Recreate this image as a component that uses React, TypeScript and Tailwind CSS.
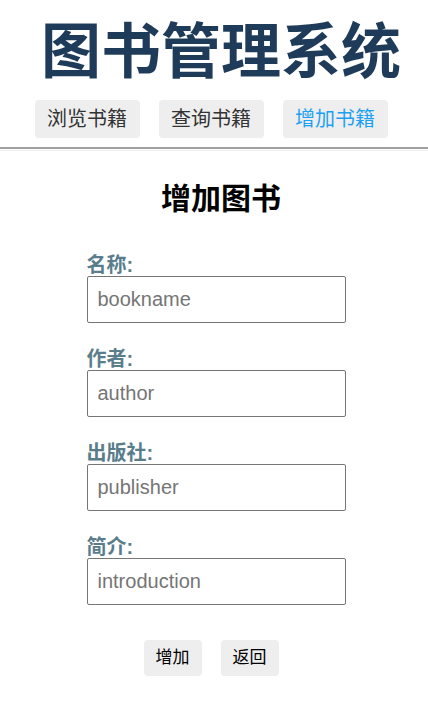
import React from 'react';

const fields = [
  { label: '名称:', placeholder: 'bookname' },
  { label: '作者:', placeholder: 'author' },
  { label: '出版社:', placeholder: 'publisher' },
  { label: '简介:', placeholder: 'introduction' },
];

const navItems = ['浏览书籍', '查询书籍', '增加书籍'];

export default function App() {
  return (
    <div className="min-h-[704px] bg-white font-['Liberation_Sans','Noto_Sans_CJK_SC',sans-serif]">
      {/* Header */}
      <h1 className="pt-[17px] pl-[14px] text-center text-[60px] font-bold leading-[72px] text-[#1f3b5a]">
        图书管理系统
      </h1>
      <nav className="mt-[11px] flex justify-center gap-[19px] pr-[6px]">
        {navItems.map((item, i) => (
          <button
            key={item}
            className={`h-[38px] w-[105px] rounded-[4px] bg-[#eeeeee] text-[20px] ${
              i === 2 ? 'text-[#1da1f2]' : 'text-[#333333]'
            }`}
          >
            {item}
          </button>
        ))}
      </nav>
      <div className="mt-[9px] h-[2px] bg-[#a0a0a0]" />
      <div className="h-px mt-px bg-[#efefef]" />

      {/* Form */}
      <h2 className="mt-[28px] pl-[14px] text-center text-[30px] font-bold leading-[40px] text-black">
        增加图书
      </h2>
      <div className="pl-[4px]">
        <form className="mx-auto mt-[35px] flex w-[259px] flex-col gap-[25px]">
          {fields.map(f => (
            <div key={f.label} className="flex flex-col">
              <label className="text-[20px] font-bold leading-[22px] text-[#5a7d8c]">
                {f.label}
              </label>
              <input
                placeholder={f.placeholder}
                className="h-[47px] w-full rounded-[2px] border border-[#767676] px-[10px] text-[20px] placeholder:text-[#757575]"
              />
            </div>
          ))}
          <div className="mt-[10px] flex justify-center gap-[19px] pr-[10px]">
            <button type="button" className="h-[36px] w-[58px] rounded-[4px] bg-[#eeeeee] text-[17px] text-black">
              增加
            </button>
            <button type="button" className="h-[36px] w-[58px] rounded-[4px] bg-[#eeeeee] text-[17px] text-black">
              返回
            </button>
          </div>
        </form>
      </div>
    </div>
  );
}
